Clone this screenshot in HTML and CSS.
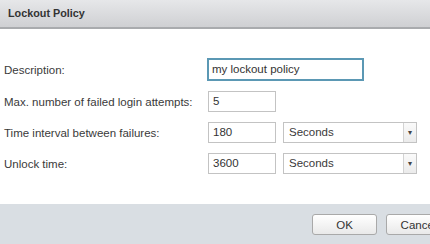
FILE: index.html
```html
<!DOCTYPE html>
<html>
<head>
<meta charset="utf-8">
<link rel="stylesheet" href="styles.css">
</head>
<body>
<div class="dialog">
  <div class="header"><span class="title">Lockout Policy</span></div>
  <div class="content">
    <div class="form">
      <label class="label">Description:</label>
      <div class="field"><div class="input input-focus">my lockout policy</div></div>
      <label class="label">Max. number of failed login attempts:</label>
      <div class="field"><div class="input input-small">5</div></div>
      <label class="label">Time interval between failures:</label>
      <div class="field">
        <div class="input input-small">180</div>
        <div class="select"><span class="select-text">Seconds</span><span class="select-arrow">&#9662;</span></div>
      </div>
      <label class="label">Unlock time:</label>
      <div class="field">
        <div class="input input-small">3600</div>
        <div class="select"><span class="select-text">Seconds</span><span class="select-arrow">&#9662;</span></div>
      </div>
    </div>
  </div>
  <div class="footer">
    <button class="btn">OK</button>
    <button class="btn">Cancel</button>
  </div>
</div>
</body>
</html>
```
FILE: styles.css
```css
* { box-sizing: border-box; }
html, body { margin: 0; padding: 0; }
body {
  width: 430px;
  height: 244px;
  overflow: hidden;
  font-family: "Liberation Sans", Arial, sans-serif;
  font-size: 11.5px;
  color: #3a3a3a;
  background: #fff;
}
.dialog {
  display: flex;
  flex-direction: column;
  height: 244px;
}
.header {
  height: 29px;
  flex: none;
  background: linear-gradient(#e6e7e9, #cfd0d3);
  border-bottom: 2px solid #a9abae;
  display: flex;
  align-items: center;
  padding-left: 8px;
  padding-bottom: 1px;
}
.title {
  font-weight: bold;
  font-size: 10.8px;
  color: #333;
}
.content {
  flex: 1;
  padding: 29px 0 0 4px;
}
.form {
  display: grid;
  grid-template-columns: 204px 1fr;
  grid-template-rows: 23px 21px 21px 21px;
  row-gap: 10px;
  align-items: center;
}
.label {
  color: #3a3a3a;
}
.field {
  display: flex;
  gap: 7px;
  align-items: center;
  height: 100%;
}
.input {
  height: 21px;
  border: 1px solid #c3c3c3;
  padding: 0 4px;
  line-height: 19px;
  color: #333;
  background: #fff;
}
.input-small { width: 68px; }
.input-focus {
  height: 23px;
  width: 157px;
  margin-left: -1px;
  border: 2px solid #5b98b4;
  line-height: 19px;
  padding-left: 3px;
}
.select {
  width: 134px;
  height: 21px;
  border: 1px solid #c3c3c3;
  display: flex;
  background: #fff;
}
.select-text {
  flex: 1;
  padding-left: 5px;
  line-height: 19px;
}
.select-arrow {
  width: 13px;
  border-left: 1px solid #d3d3d3;
  background: linear-gradient(#fafafa, #ebebeb);
  font-size: 8px;
  line-height: 19px;
  text-align: center;
  color: #444;
}
.footer {
  height: 40px;
  flex: none;
  background: #d9dee3;
  display: flex;
  justify-content: flex-start;
  gap: 9px;
  padding: 10px 0 0 312px;
  overflow: hidden;
}
.btn {
  flex: none;
  height: 21px;
  width: 65px;
  border: 1px solid #a9a9a9;
  border-radius: 3px;
  background: linear-gradient(#ffffff, #e9e9e9);
  font-family: "Liberation Sans", Arial, sans-serif;
  font-size: 11.5px;
  color: #333;
  padding: 0;
}
```
